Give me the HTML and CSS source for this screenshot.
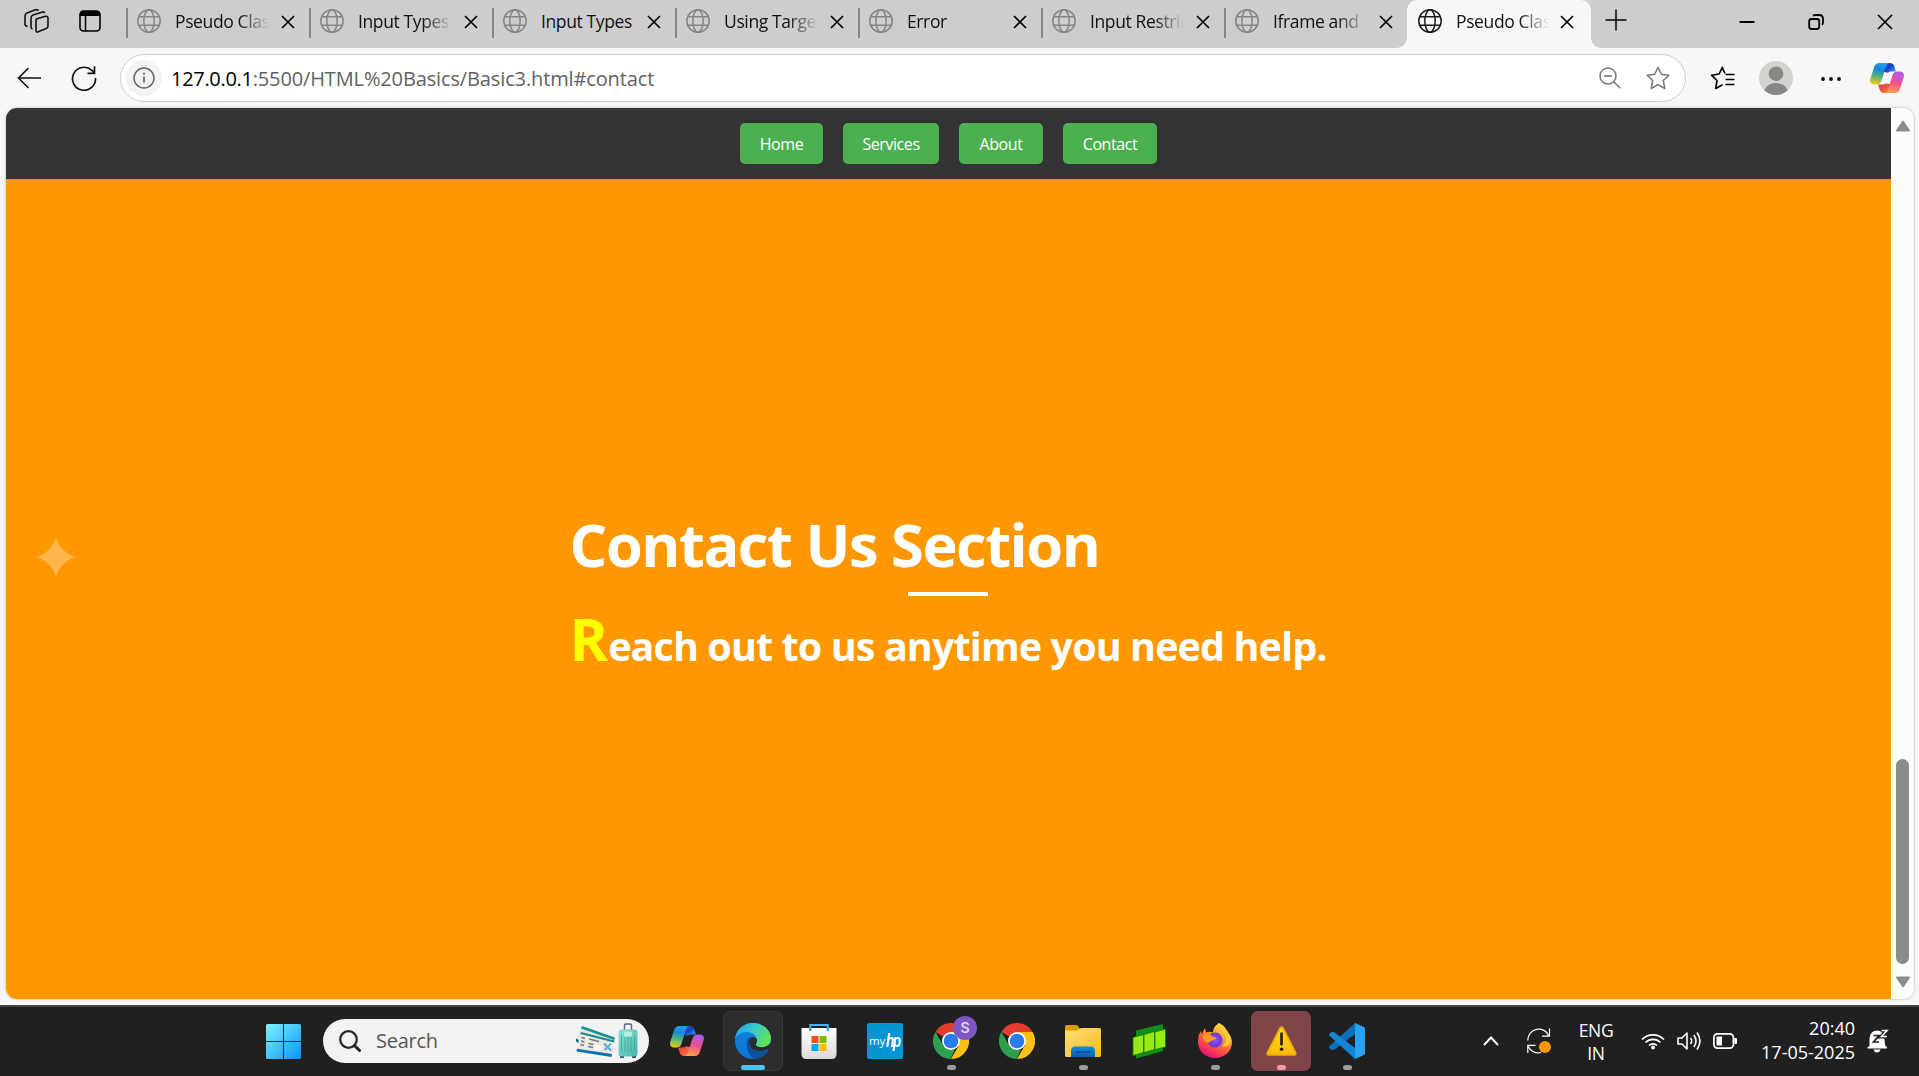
FILE: index.html
```html
<!DOCTYPE html>
<html lang="en">
<head>
<meta charset="utf-8">
<title>Pseudo Classes</title>
<link rel="stylesheet" href="styles.css">
</head>
<body>
<svg class="defs" width="0" height="0" aria-hidden="true">
  <defs>
    <linearGradient id="cpBlue" x1="0.5" y1="0" x2="0.3" y2="1"><stop offset="0" stop-color="#1d9df2"/><stop offset=".3" stop-color="#168ad8"/><stop offset=".6" stop-color="#4db382"/><stop offset="1" stop-color="#f2cb0c"/></linearGradient>
    <linearGradient id="cpFold" x1="0" y1="0" x2="1" y2="1"><stop offset="0" stop-color="#1b62d8"/><stop offset=".45" stop-color="#173fc0"/><stop offset="1" stop-color="#35b4f4"/></linearGradient>
    <linearGradient id="cpPink" x1="0.6" y1="0" x2="0.4" y2="1"><stop offset="0" stop-color="#a95cf0"/><stop offset=".5" stop-color="#ee4f8e"/><stop offset="1" stop-color="#ffa04e"/></linearGradient>
    <linearGradient id="cpRed" x1="0" y1="0" x2="1" y2="1"><stop offset="0" stop-color="#e2353c"/><stop offset="1" stop-color="#ff7a3d"/></linearGradient>
    <linearGradient id="winBlue" x1="0" y1="0" x2="1" y2="1"><stop offset="0" stop-color="#7df3ff"/><stop offset="1" stop-color="#0a93fa"/></linearGradient>
    <linearGradient id="edgeTop" x1="0" y1="0" x2="1" y2=".4"><stop offset="0" stop-color="#1b9fe6"/><stop offset=".5" stop-color="#36c6d8"/><stop offset="1" stop-color="#62e05c"/></linearGradient>
    <linearGradient id="edgeBody" x1="0" y1="0" x2=".7" y2="1"><stop offset="0" stop-color="#1387dc"/><stop offset="1" stop-color="#0b6ed2"/></linearGradient>
    <linearGradient id="bag" x1="0" y1="0" x2="0" y2="1"><stop offset="0" stop-color="#fff"/><stop offset="1" stop-color="#dadada"/></linearGradient>
    <linearGradient id="folder" x1="0" y1="0" x2="1" y2="1"><stop offset="0" stop-color="#ffe07a"/><stop offset="1" stop-color="#f8b81c"/></linearGradient>
    <linearGradient id="tray" x1="0" y1="0" x2="0" y2="1"><stop offset="0" stop-color="#0c8ee0"/><stop offset="1" stop-color="#0a5db0"/></linearGradient>
    <linearGradient id="fox" x1=".85" y1="0" x2=".3" y2="1"><stop offset="0" stop-color="#fff04a"/><stop offset=".4" stop-color="#ff9a2c"/><stop offset=".7" stop-color="#ff4a45"/><stop offset="1" stop-color="#d9127e"/></linearGradient>
    <radialGradient id="foxEye"><stop offset="0" stop-color="#9a4bf5"/><stop offset="1" stop-color="#5a3fd0"/></radialGradient>
    <linearGradient id="warn" x1="0" y1="0" x2="0" y2="1"><stop offset="0" stop-color="#ffdf22"/><stop offset="1" stop-color="#fcb900"/></linearGradient>
    <linearGradient id="case" x1="0" y1="0" x2="1" y2="1"><stop offset="0" stop-color="#8ee0d3"/><stop offset="1" stop-color="#45b8aa"/></linearGradient>
    <symbol id="globe" viewBox="0 0 24 24"><g fill="none" stroke="currentColor" stroke-width="1.5"><circle cx="12" cy="12" r="11.2"/><ellipse cx="12" cy="12" rx="5.2" ry="11.2"/><path d="M2 7.8h20M2 16.2h20"/></g></symbol>
    <symbol id="close" viewBox="0 0 14 14"><path d="M1 1l12 12M13 1L1 13" fill="none" stroke="#000" stroke-width="1.7"/></symbol>
    <symbol id="copilot" viewBox="0 0 34 30">
      <path fill="url(#cpFold)" d="M14 0h5.500c3 0 4.300 1.600 5 4l1.400 4.500h-3.500c-2 0-3.400.3-4.400 1.300L14 9z"/>
      <path fill="url(#cpRed)" d="M20 30h-5.500c-3 0-4.300-1.600-5-4L8.100 21.500h3.500c2 0 3.400-.3 4.400-1.300L20 21z"/>
      <path fill="url(#cpBlue)" d="M9.500 0H20c-2.500 0-3.600 2-4.300 4.500l-4 12.500c-1.100 3.400-2.700 4.500-6.200 4.500H4.200C.6 21.500-.6 19 .4 15.500L4 4.500C4.900 1.500 6.500 0 9.500 0z"/>
      <path fill="url(#cpPink)" d="M24.500 30H14c2.500 0 3.600-2 4.300-4.500l4-12.500c1.100-3.400 2.700-4.500 6.200-4.500h1.300c3.600 0 4.800 2.500 3.800 6L30 25.500c-.9 3-2.500 4.500-5.500 4.500z"/>
    </symbol>
    <symbol id="chrome" viewBox="0 0 36 36">
      <path fill="#e33b2e" d="M18 18L2.400 9a18 18 0 0 1 31.200 0z"/>
      <path fill="#fbc116" d="M18 9h15.600A18 18 0 0 1 18 36l7.800-13.500z"/>
      <path fill="#2da04c" d="M2.400 9l7.800 13.500L18 27l4-.5L17.500 36A18 18 0 0 1 2.400 9z"/>
      <circle cx="18" cy="18" r="9" fill="#fff"/><circle cx="18" cy="18" r="7.300" fill="#2a7bee"/>
    </symbol>
  </defs>
</svg>

<header class="tabstrip">
  <svg class="workspaces" viewBox="0 0 25 24" fill="none" stroke="#111" stroke-width="1.600" stroke-linejoin="round"><path d="M13 9.800l8.500-2.500q2.500-.5 2.500 2V17q0 1.800-1.800 2.500l-8 3.300q-2.200.7-2.200-1.500V11.300q0-1.100 1-1.500z"/><path d="M8.500 20q-1.500-.4-1.500-2V9q0-2.200 2-3l9.500-3q1.800-.4 2.200 1"/><path d="M3.500 17.500Q1 17 1 15V7q0-2.200 2-3l8.500-3.200q2-.6 3 .8"/></svg>
  <svg class="actions" viewBox="0 0 22 22"><rect x="1" y="1" width="20" height="20" rx="3.500" fill="none" stroke="#000" stroke-width="1.600"/><path d="M1 6V4a3 3 0 0 1 3-3h14a3 3 0 0 1 3 3v2z"/><path d="M6.500 6v15" stroke="#000" stroke-width="1.500"/></svg>
  <div class="tabs">
    <div class="tab"><svg class="globe"><use href="#globe"/></svg><span>Pseudo Classes</span><svg class="x"><use href="#close"/></svg></div>
    <div class="tab"><svg class="globe"><use href="#globe"/></svg><span>Input Types</span><svg class="x"><use href="#close"/></svg></div>
    <div class="tab"><svg class="globe"><use href="#globe"/></svg><span class="whole">Input Types</span><svg class="x"><use href="#close"/></svg></div>
    <div class="tab"><svg class="globe"><use href="#globe"/></svg><span>Using Target</span><svg class="x"><use href="#close"/></svg></div>
    <div class="tab"><svg class="globe"><use href="#globe"/></svg><span>Error</span><svg class="x"><use href="#close"/></svg></div>
    <div class="tab"><svg class="globe"><use href="#globe"/></svg><span>Input Restrictions</span><svg class="x"><use href="#close"/></svg></div>
    <div class="tab"><svg class="globe"><use href="#globe"/></svg><span>Iframe and</span><svg class="x"><use href="#close"/></svg></div>
    <div class="tab active"><svg class="globe"><use href="#globe"/></svg><span>Pseudo Classes</span><svg class="x"><use href="#close"/></svg></div>
  </div>
  <svg class="newtab" viewBox="0 0 22 22"><path d="M11 .5v21M.5 11h21" stroke="#000" stroke-width="1.500"/></svg>
  <div class="window">
    <svg viewBox="0 0 16 16"><path d="M.5 8h15" stroke="#000" stroke-width="2"/></svg>
    <svg viewBox="0 0 16 16" fill="none" stroke="#000" stroke-width="1.800"><rect x="1.200" y="5" width="10" height="10" rx="2.200"/><path d="M5 1.800Q6 1 7.500 1H11q4 0 4 4v3.500q0 1.500-1 2.300"/></svg>
    <svg viewBox="0 0 16 16"><path d="M1 1l14 14M15 1L1 15" stroke="#000" stroke-width="1.700"/></svg>
  </div>
</header>

<div class="toolbar">
  <svg class="back" viewBox="0 0 24 22" fill="none" stroke="#111" stroke-width="1.600"><path d="M11.500 1l-10 10 10 10M1.500 11H24"/></svg>
  <svg class="reload" viewBox="0 0 26 26" fill="none" stroke="#111" stroke-width="1.700"><path d="M24.500 13A11.500 11.500 0 1 1 20.700 5.200L23.500 8M23.500 1.200V8.300H16.500"/></svg>
  <div class="address">
    <div class="info"><svg viewBox="0 0 22 22"><circle cx="11" cy="11" r="10" fill="none" stroke="#666" stroke-width="1.500"/><path d="M11 9.500v6" stroke="#666" stroke-width="1.700"/><circle cx="11" cy="6.700" r="1.100" fill="#666"/></svg></div>
    <div class="url"><b>127.0.0.1</b>:5500/HTML%20Basics/Basic3.html#contact</div>
    <svg class="zoomout" viewBox="0 0 22 22" fill="none" stroke="#777" stroke-width="1.500"><circle cx="9" cy="9" r="8"/><path d="M5 9h8M14.700 14.700l6.500 6.500"/></svg>
    <svg class="star" viewBox="0 0 24 24" fill="none" stroke="#777" stroke-width="1.500" stroke-linejoin="round"><path d="M12 1.200l3.300 7 7.600 1-5.600 5.300 1.500 8-6.800-3.900-6.800 3.900 1.500-8L1.100 9.200l7.600-1z"/></svg>
  </div>
  <svg class="favs" viewBox="0 0 24 24" fill="none" stroke="#000" stroke-width="1.600" stroke-linejoin="round"><path d="M14.500 7.500L11.800 1.300 8.600 8 1 9.200l5.500 5.300-1.300 8 6.800-3.700M15 8.500h9M15 13.500h9M15 18.500h9"/></svg>
  <svg class="avatar" viewBox="0 0 34 34"><clipPath id="disc"><circle cx="17" cy="17" r="17"/></clipPath><circle cx="17" cy="17" r="17" fill="#d4d2cd"/><circle cx="17" cy="12.700" r="7.300" fill="#8b8784"/><ellipse cx="17" cy="33" rx="12.500" ry="11" fill="#8b8784" clip-path="url(#disc)"/></svg>
  <svg class="more" viewBox="0 0 20 4"><circle cx="2" cy="2" r="1.900"/><circle cx="10" cy="2" r="1.900"/><circle cx="18" cy="2" r="1.900"/></svg>
  <svg class="cp"><use href="#copilot"/></svg>
</div>

<div class="viewport">
  <div class="frame">
    <div class="page">
      <nav class="nav"><a class="home">Home</a><a class="services">Services</a><a class="about">About</a><a class="contact">Contact</a></nav>
      <main class="section">
        <svg class="spark" viewBox="0 0 40 40"><path fill="#ffb64d" d="M20 0Q24.500 15.500 40 20 24.500 24.500 20 40 15.500 24.500 0 20 15.500 15.500 20 0z"/></svg>
        <div class="copy">
          <h1>Contact Us Section</h1>
          <div class="rule"></div>
          <p><span class="cap">R</span>each out to us anytime you need help.</p>
        </div>
      </main>
    </div>
    <div class="scroll">
      <svg class="arrow" viewBox="0 0 14 11"><path d="M7 1.200L13 10H1z" fill="#8b8b8b" stroke="#8b8b8b" stroke-width="2" stroke-linejoin="round"/></svg>
      <div class="thumb"></div>
      <svg class="arrow" viewBox="0 0 14 11"><path d="M7 9.800L13 1H1z" fill="#8b8b8b" stroke="#8b8b8b" stroke-width="2" stroke-linejoin="round"/></svg>
    </div>
  </div>
</div>

<footer class="taskbar">
  <svg class="start" viewBox="0 0 35 35"><path fill="url(#winBlue)" d="M1.500 0H17v17H0V1.500Q0 0 1.500 0zM18 0h15.500Q35 0 35 1.500V17H18zM0 18h17v17H1.500Q0 35 0 33.500zM18 18h17v15.500q0 1.500-1.500 1.500H18z"/></svg>
  <div class="search">
    <svg class="lens" viewBox="0 0 22 22" fill="none" stroke="#262626"><circle cx="9.500" cy="9.500" r="8.300" stroke-width="2.200"/><path d="M15.500 15.500l5 5" stroke-width="3" stroke-linecap="round"/></svg>
    <span>Search</span>
    <svg class="trip" viewBox="0 0 62 36">
      <path fill="#e9e4dc" d="M6 3.500l33 11.500-4 12L0 16z"/><path fill="#15958f" d="M6 3l33 11.500-1 2.500L5 5.500z"/><path fill="#0f6f7c" d="M0 15.500l3 1.500-.5 3L0 18.500z"/>
      <path fill="#efe9e0" d="M4.500 9l33.500 9-2.500 15L1 28z"/><path fill="#0e8b94" d="M5 9l33.500 8.500-.5 2L4.500 11z"/><path fill="#0b73ac" d="M1 25.800l35 5.200-.5 3L.5 28.500z"/>
      <path stroke="#77758f" stroke-width="1.400" fill="none" d="M5.500 14.500l3.500 1M5 18l3.500 1M4.500 21.500l3.500 1M13 16l10 2.500M12.500 20.500l5 1M12 23.500l5 1"/><path fill="#fff" d="M19 22l7 1.300-.6 4-7-1z"/><path stroke="#5aaed6" stroke-width="2" d="M28 20.500l7 7M35 20.500l-6.500 6.500" fill="none"/>
      <path d="M48.500 8V2.200q0-1.200 1.200-1.200h4.600q1.200 0 1.200 1.200V8" fill="none" stroke="#62688f" stroke-width="1.500"/><rect x="44" y="32" width="4" height="3" rx="1" fill="#3c3a60"/><rect x="56" y="32" width="4" height="3" rx="1" fill="#3c3a60"/><rect x="42.500" y="6.500" width="19" height="27" rx="3" fill="url(#case)"/><path d="M45.500 12v17M49 14v15M52 14v15M55 14v15M58.500 12v17" stroke="#3ca398" stroke-width=".8"/><rect x="48" y="8.500" width="8" height="5" rx="1" fill="#b7ece2"/>
    </svg>
  </div>
  <div class="apps">
    <div class="app"><svg class="copilot"><use href="#copilot"/></svg></div>
    <div class="app current"><svg viewBox="0 0 36 36"><circle cx="18" cy="18" r="18" fill="url(#edgeBody)"/><path fill="url(#edgeTop)" d="M0 16C1 6 9 0 18 0c11 0 18 8 18 15.500 0 5.500-4.500 8.800-9 8.800-4 0-6.300-1.200-6.300-2.700 0-1 1.300-1.700 1.300-4.200C22 13 17.500 9 11.500 9 6 9 2 12 0 16z"/><path fill="#104f9e" d="M11.500 20c0-3 1.500-5.500 4-6-.8 1.200-1.500 2.700-1.500 5 0 5 4.500 9 11 9 3 0 5.500-.8 7.300-1.700.8-.4 1.500.3.900 1.100A18 18 0 0 1 20 36c-5-2.500-8.500-9-8.500-16z"/><path fill="#2c2c2c" d="M20.700 21.600c0 1.500 2.300 2.700 6.300 2.700 3 0 6-1.200 9-4.300l.5 8-3-.7c.6-.8-.1-1.500-.9-1.100A16 16 0 0 1 25 28c-6.500 0-11-4-11-9 0-2.300.8-4.200 3.500-5 3 .3 4.500 2 4.500 3.400 0 2.500-1.300 3.200-1.300 4.200z"/></svg></div>
    <div class="app"><svg viewBox="0 0 36 36"><path d="M9.300 8V2h17.400v6" fill="none" stroke="#42b5f2" stroke-width="2"/><path fill="url(#bag)" d="M.5 5h35v26q0 5-5 5h-25q-5 0-5-5z"/><path d="M9.300 5v3M26.700 5v3" stroke="#1490df" stroke-width="2"/><path fill="#f25022" d="M10.500 13h7v7h-7z"/><path fill="#7fba00" d="M18.500 13h7v7h-7z"/><path fill="#00a4ef" d="M10.500 21h7v7h-7z"/><path fill="#ffb900" d="M18.500 21h7v7h-7z"/></svg></div>
    <div class="app"><div class="myhp"><span>my</span><b>hp</b></div></div>
    <div class="app running"><svg><use href="#chrome"/></svg><span class="badge">S</span></div>
    <div class="app"><svg><use href="#chrome"/></svg></div>
    <div class="app running"><svg viewBox="0 0 36 36"><path fill="#dc9a05" d="M0 4q0-2 2-2h9q1.500 0 2.500 1.500L15 6v6H0z"/><path fill="url(#folder)" d="M0 7.500h11.500q1.500 0 2.500-1l.7-.7q.8-.8 2-.8H34.500Q36 5 36 6.500v26q0 1.500-1.500 1.500h-33Q0 34 0 32.500z"/><path fill="url(#tray)" d="M6 34v-6q0-4.500 4.500-4.500h15Q30 23.500 30 28v6z"/><path d="M11 29h14" stroke="#0a4a8c" stroke-width="1.800"/></svg></div>
    <div class="app"><svg viewBox="0 0 36 36"><path fill="#0f8e1c" d="M5 7.500L32 1v27L5 35.500z"/><path fill="#98ea10" stroke="#14780f" stroke-width=".8" d="M2 14.500l10.500-3v18L2 32.500zM13 11.500l10.500-3v18L13 29.500zM24 9l10.500-3v18L24 26.500z"/></svg></div>
    <div class="app running"><svg viewBox="0 0 36 36"><path fill="url(#fox)" d="M22 0c6 3 7 6 8 9 3.500 3 5 6.500 5 10.500C35 28 27.500 35 18 35S1 28 1 19c0-5 1-8.500 3-11l.5 3.500L8 5l1 4.500q3-1.500 7 0C16 5 19 2 22 0z"/><circle cx="18" cy="17" r="7.500" fill="url(#foxEye)"/><path fill="#ff9b26" d="M6 12.500c5-2.500 8-.5 10.500 1.500 2.500 0 3 .8 3 1.700-2.500.5-5 1.300-7.500 3.800-4 .5-6-3-6-7z"/><path fill="#ffc93a" d="M22 0c0 6 5 8 6.500 13.500.8 4-.5 8-3 9.500C30 25 35 21 33.500 14 31 8 28 4 22 0z"/></svg></div>
    <div class="app running alert"><svg viewBox="0 0 36 36"><path fill="url(#warn)" stroke="#f0b000" stroke-width="2" stroke-linejoin="round" d="M16.500 3.800q1.500-2 3 0l13.700 27q.8 2.200-1.200 2.200H4q-2 0-1.200-2.200z"/><path d="M18 10v11.500" stroke="#2b2416" stroke-width="3" stroke-linecap="round"/><circle cx="18" cy="27" r="1.900" fill="#2b2416"/></svg></div>
    <div class="app running"><svg viewBox="0 0 36 36"><path fill="#0b70b8" d="M26 0v11L5 27q-1.500.8-2.800-.2L.7 25.400q-1-1.200 0-2.400z"/><path fill="#1485d2" d="M26 36V25L5 9Q3.500 8.200 2.200 9.200L.7 10.600q-1 1.200 0 2.400z"/><path fill="#27a3f2" d="M26 0l9 4q1 .6 1 1.800v24.400q0 1.200-1 1.800l-9 4z"/></svg></div>
  </div>
  <div class="tray">
    <svg class="chev" viewBox="0 0 16 10"><path d="M1 9l7-7.500L15 9" fill="none" stroke="#fff" stroke-width="2"/></svg>
    <svg class="sync" viewBox="0 0 24 26"><path d="M.8 12.500A11 11 0 0 1 22 8M22.500.5V8.200H15M.8 25V17.300H8.500M1 18a11 11 0 0 0 13 6.500" fill="none" stroke="#fff" stroke-width="1.200"/><circle cx="18" cy="19" r="6" fill="#ff9800"/></svg>
    <div class="lang">ENG<br>IN</div>
    <svg class="wifi" viewBox="0 0 24 18" fill="none" stroke="#fff" stroke-width="1.700"><path d="M1 7.500a15.500 15.500 0 0 1 22 0M4.500 10.500a10.500 10.500 0 0 1 15 0M8 13.500a5.700 5.700 0 0 1 8 0"/><circle cx="12" cy="15.500" r="1.900" fill="#fff" stroke="none"/></svg>
    <svg class="sound" viewBox="0 0 24 20" fill="none" stroke="#fff" stroke-width="1.600" stroke-linejoin="round"><path d="M1 7h4l5-5v16l-5-5H1zM13.500 7q2.400 3 0 6M16.800 4q4.500 6 0 12M20 1.500q6 8.500 0 17"/></svg>
    <svg class="battery" viewBox="0 0 24 16"><rect x=".9" y=".9" width="19.500" height="14.200" rx="3.500" fill="none" stroke="#fff" stroke-width="1.700"/><path fill="#fff" d="M3.500 3.500H9v9H3.500zM21.300 5H23q1 0 1 1v4q0 1-1 1h-1.700z"/></svg>
    <div class="clock">20:40<br>17-05-2025</div>
    <svg class="bell" viewBox="0 0 22 24"><path fill="#fff" d="M2.500 17V9.500a7.500 8 0 0 1 15 0L18 16l2 2.300v1.200H.5v-1.200zM6.500 20.500h7q-.8 3-3.500 3t-3.500-3z"/><path d="M6.500 6.500h5.500l-5.500 6.500H12" fill="none" stroke="#202020" stroke-width="1.700"/><path d="M14.500 1.500H20l-5.500 6H20" fill="none" stroke="#202020" stroke-width="4"/><path d="M14.500 1.500H20l-5.500 6H20" fill="none" stroke="#fff" stroke-width="1.600"/></svg>
  </div>
</footer>
</body>
</html>
```
FILE: styles.css
```css
* { box-sizing: border-box; }

body {
  margin: 0;
  width: 1919px;
  height: 1076px;
  overflow: hidden;
  display: flex;
  flex-direction: column;
  background: #f7f7f7;
  font-family: "Open Sans", "Noto Sans", sans-serif;
}

svg { display: block; flex: none; }
.defs { position: absolute; }

/* tab strip */
.tabstrip {
  height: 48px;
  flex: none;
  display: flex;
  align-items: flex-start;
  background: #cdcdcd;
}
.workspaces { width: 25px; height: 24px; margin: 9px 0 0 24px; }
.actions { width: 22px; height: 22px; margin: 10px 0 0 30px; }
.tabs { display: flex; margin-left: 25px; }
.tab {
  width: 183px;
  height: 48px;
  padding: 0 14px 6px 9px;
  display: flex;
  align-items: center;
}
.tab::before {
  content: "";
  flex: none;
  width: 2px;
  height: 30px;
  margin: 4px 9px 0 -9px;
  background: #868686;
}
.tab .globe { width: 24px; height: 24px; margin-left: 9px; color: #858585; }
.tab::before { margin-right: 0; }
.tab span {
  flex: 1;
  margin: -1px 12px 0 14px;
  overflow: hidden;
  white-space: nowrap;
  font-size: 17.5px;
  line-height: 28px;
  letter-spacing: -0.38px;
  color: #111;
  -webkit-mask-image: linear-gradient(90deg, #000 68%, transparent 100%);
  mask-image: linear-gradient(90deg, #000 68%, transparent 100%);
}
.tab span.whole { overflow: visible; -webkit-mask-image: none; mask-image: none; }
.tab .x { width: 14px; height: 14px; margin-top: 1px; }
.tab.active {
  position: relative;
  width: 184px;
  padding-right: 17px;
  background: #f7f7f7;
  border-radius: 10px 10px 0 0;
}
.tab.active::before { background: transparent; }
.tab.active span { margin-right: 11px; }
.tab.active .globe { color: #1c1c1c; }
.tab.active::after {
  content: "";
  position: absolute;
  left: -10px;
  right: -10px;
  bottom: 0;
  height: 10px;
  background:
    radial-gradient(circle at 0 0, transparent 9.5px, #f7f7f7 10px) left / 10px 10px no-repeat,
    radial-gradient(circle at 100% 0, transparent 9.5px, #f7f7f7 10px) right / 10px 10px no-repeat;
}
.newtab { width: 22px; height: 22px; margin: 9px 0 0 14px; }
.window { display: flex; gap: 53px; margin: 14px 0 0 112px; }
.window svg { width: 16px; height: 16px; }

/* toolbar */
.toolbar {
  height: 60px;
  flex: none;
  display: flex;
  align-items: center;
}
.back { width: 24px; height: 22px; margin-left: 17px; }
.reload { width: 26px; height: 26px; margin-left: 30px; }
.address {
  width: 1566px;
  height: 48px;
  margin-left: 23px;
  padding: 0 15px 0 5px;
  display: flex;
  align-items: center;
  background: #fff;
  border: 1.5px solid #cfcfcf;
  border-radius: 24px;
}
.info {
  width: 36px;
  height: 36px;
  display: grid;
  place-items: center;
  border-radius: 50%;
  background: #f3f3f3;
}
.info svg { width: 22px; height: 22px; }
.url {
  flex: 1;
  margin-left: 9px;
  padding-top: 1px;
  font-size: 20px;
  line-height: 30px;
  letter-spacing: -0.13px;
  color: #626262;
}
.url b { font-weight: 400; color: #000; letter-spacing: -0.3px; }
.zoomout { width: 22px; height: 22px; }
.star { width: 24px; height: 24px; margin-left: 25px; }
.favs { width: 25px; height: 24px; margin-left: 24px; }
.avatar { width: 34px; height: 34px; margin-left: 24px; }
.more { width: 20px; height: 4px; margin: 2px 0 0 28px; }
.cp { width: 34px; height: 30px; margin-left: 29px; }

/* page */
.viewport { height: 897px; flex: none; padding: 0 5px 6px 6px; }
.frame {
  height: 891px;
  display: flex;
  overflow: hidden;
  border-radius: 11px;
  background: #fcfcfc;
  box-shadow: 0 0 3px rgba(0, 0, 0, .28);
}
.page { width: 1885px; }
.nav {
  height: 71px;
  display: flex;
  justify-content: center;
  align-items: center;
  gap: 20px;
  background: #333;
}
.nav a {
  height: 41px;
  border-radius: 5px;
  background: #4caf50;
  color: #fff;
  font-size: 16px;
  line-height: 42px;
  letter-spacing: -0.42px;
  text-align: center;
}
.home { width: 83px; }
.services { width: 96px; }
.about { width: 84px; }
.contact { width: 94px; }
.section {
  position: relative;
  height: 820px;
  padding: 12px 2px 0 0;
  display: flex;
  justify-content: center;
  align-items: center;
  background: #ff9800;
  color: #fff;
}
.spark { position: absolute; left: 30px; top: 358px; width: 40px; height: 40px; }
.copy { width: 756px; }
h1 {
  margin: 0;
  font-size: 59.5px;
  font-weight: 800;
  font-weight: 700;
  line-height: 80px;
  letter-spacing: -1.45px;
}
.rule { width: 80px; height: 4px; margin: 8px auto 10px; background: #fff; }
p {
  margin: 0;
  font-size: 39.5px;
  font-weight: 700;
  line-height: 80px;
  letter-spacing: -0.9px;
  white-space: nowrap;
}
.cap { font-size: 58.5px; line-height: 60px; color: #ff0; letter-spacing: 0; }

.scroll {
  flex: 1;
  display: flex;
  flex-direction: column;
  align-items: center;
  padding: 12px 0 11px;
}
.arrow { width: 14px; height: 12px; }
.thumb {
  width: 13px;
  height: 205px;
  margin: auto 0 12px;
  border-radius: 7px;
  background: #8b8b8b;
}

/* taskbar */
.taskbar {
  height: 71px;
  flex: none;
  display: flex;
  align-items: center;
  padding-bottom: 1px;
  background: #202020;
  border-top: 2px solid #434543;
}
.start { width: 35px; height: 35px; margin-left: 266px; }
.search {
  width: 326px;
  height: 44px;
  margin-left: 22px;
  padding: 0 11px 0 16px;
  display: flex;
  align-items: center;
  border-radius: 22px;
  background: #f3f3f3;
}
.lens { width: 22px; height: 22px; }
.search span {
  flex: 1;
  margin-left: 15px;
  font-size: 20px;
  line-height: 28px;
  letter-spacing: -0.25px;
  color: #555;
}
.trip { width: 62px; height: 36px; }
.apps { display: flex; margin-left: 5px; }
.app {
  position: relative;
  width: 60px;
  height: 60px;
  margin: 0 3px;
  display: grid;
  place-items: center;
  border-radius: 7px;
}
.app svg { width: 36px; height: 36px; }
.app svg.copilot { width: 34px; height: 30px; }
.app.current { background: #2d2d2d; border: 1px solid #383838; }
.app.running::after,
.app.current::after {
  content: "";
  position: absolute;
  bottom: 1px;
  left: 25.5px;
  width: 9px;
  height: 5px;
  border-radius: 3px;
  background: #9b9b9b;
}
.app.current::after { left: 17px; bottom: 0; width: 24px; background: #4cc2ff; }
.app.alert { background: #7f4549; }
.app.alert::after { background: #ff99a4; }
.app.alert svg { width: 33px; height: 34px; }
.myhp {
  width: 36px;
  height: 36px;
  display: flex;
  justify-content: center;
  align-items: center;
  border-radius: 2px;
  background: #0096d6;
  color: #fff;
  font-size: 11.5px;
  line-height: 36px;
  letter-spacing: -0.3px;
}
.myhp b { font: italic 700 18px/32px "Roboto", sans-serif; letter-spacing: -1.8px; transform: scaleX(.85); }
.badge {
  position: absolute;
  left: 32px;
  top: 5px;
  width: 24px;
  height: 24px;
  border-radius: 50%;
  background: #7e57c2;
  color: #e4dbf3;
  font: 500 15px/24px "Roboto", sans-serif;
  text-align: center;
}
.tray {
  flex: 1;
  margin-left: 87px;
  display: grid;
  grid-template-columns: 48px 48px 66px 48px 24px 48px 106px 46px;
  align-items: center;
  justify-items: center;
  color: #fff;
  font-size: 18px;
  line-height: 24px;
  letter-spacing: 0;
}
.chev { width: 16px; height: 10px; }
.sync { width: 24px; height: 26px; }
.lang { text-align: center; font-size: 17.5px; line-height: 23px; letter-spacing: -0.3px; padding-top: 1px; }
.wifi { width: 24px; height: 18px; }
.sound { width: 24px; height: 20px; }
.battery { width: 24px; height: 16px; }
.clock { justify-self: end; text-align: right; padding-bottom: 2px; }
.bell { width: 22px; height: 24px; }
```
